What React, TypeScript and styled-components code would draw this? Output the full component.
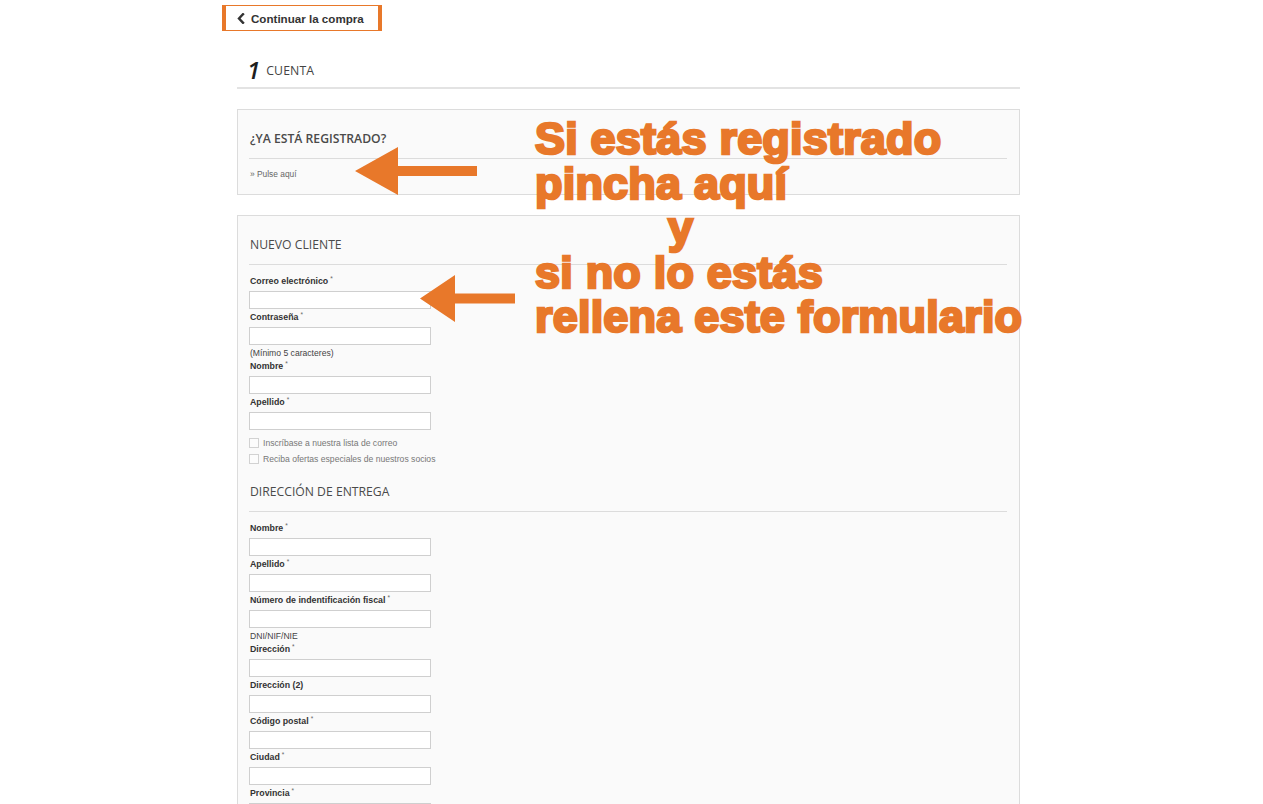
import React from "react";
import styled, { createGlobalStyle } from "styled-components";

const ORANGE = "#e8782a";

const GlobalStyle = createGlobalStyle`
  html, body {
    margin: 0;
    padding: 0;
    background: #ffffff;
  }
  body {
    font-family: "Liberation Sans", Arial, sans-serif;
    color: #333;
  }
  * { box-sizing: border-box; }
`;

const Page = styled.div`
  position: relative;
  width: 1263px;
  min-height: 804px;
  overflow: hidden;
`;

const Column = styled.div`
  margin-left: 237px;
  width: 783px;
  padding-top: 5px;
`;

const BackButton = styled.button`
  display: flex;
  align-items: center;
  gap: 6px;
  margin-left: -15px;
  width: 160px;
  height: 26px;
  padding: 0 0 0 11px;
  background: #fff;
  border: 1px solid ${ORANGE};
  border-left: 4px solid ${ORANGE};
  border-right: 4px solid ${ORANGE};
  font-family: "Liberation Sans", Arial, sans-serif;
  font-size: 11.6px;
  font-weight: 700;
  color: #333;
  cursor: pointer;
`;

const StepHeader = styled.div`
  display: flex;
  align-items: center;
  gap: 6px;
  height: 32px;
  margin-top: 26px;
  padding: 0 0 4px 10px;
  border-bottom: 2px solid #e3e3e3;
`;

const StepNumber = styled.span`
  font-family: "Open Sans", sans-serif;
  font-style: italic;
  font-weight: 600;
  font-size: 24px;
  line-height: 24px;
  color: #1e1e1e;
`;

const StepTitle = styled.span`
  font-family: "Open Sans", sans-serif;
  font-size: 12.3px;
  color: #444;
  letter-spacing: 0.1px;
`;

const Panel = styled.section<{ $gap: number }>`
  margin-top: ${(p) => p.$gap}px;
  background: #fafafa;
  border: 1px solid #dcdcdc;
  padding: 20px 12px 14px 11px;
`;

const SectionTitle = styled.h2<{ $weight?: number; $top?: number }>`
  margin: ${(p) => p.$top ?? 0}px 0 0 0;
  padding: 0 0 10px 1px;
  border-bottom: 1px solid #dcdcdc;
  font-family: "Open Sans", sans-serif;
  font-weight: ${(p) => p.$weight ?? 400};
  font-size: 12.2px;
  line-height: 18px;
  color: #4a4a4a;
`;

const SmallLink = styled.a`
  display: block;
  margin-top: 9px;
  font-size: 8.4px;
  line-height: 12px;
  color: #666;
  text-decoration: none;
  padding-left: 1px;
`;

const FieldList = styled.div`
  margin-top: 10px;
  display: flex;
  flex-direction: column;
`;

const Field = styled.div`
  display: flex;
  flex-direction: column;
`;

const Label = styled.label`
  font-size: 8.8px;
  font-weight: 700;
  line-height: 12px;
  color: #333;
  padding-left: 1px;
  margin-bottom: 4px;
`;

const Req = styled.sup`
  font-size: 6.5px;
  font-weight: 400;
  color: #666;
  margin-left: 2px;
  vertical-align: 3px;
  line-height: 0;
`;

const TextInput = styled.input`
  display: block;
  width: 182px;
  height: 18px;
  margin: 0 0 2px 0;
  padding: 0 4px;
  background: #fff;
  border: 1px solid #cfcfcf;
  border-radius: 0;
  outline: none;
`;

const Hint = styled.div`
  font-size: 8.6px;
  line-height: 12px;
  color: #444;
  padding-left: 1px;
  margin-bottom: 1px;
`;

const CheckList = styled.div`
  margin-top: 3px;
  display: flex;
  flex-direction: column;
`;

const CheckRow = styled.label`
  display: flex;
  align-items: center;
  gap: 4px;
  height: 16px;
  font-size: 8.6px;
  color: #777;
`;

const CheckBox = styled.span`
  display: block;
  width: 10px;
  height: 10px;
  background: #fcfcfc;
  border: 1px solid #d2d2d2;
`;

const Callout = styled.div`
  position: absolute;
  left: 535px;
  top: 117px;
  font-family: "Liberation Sans", Arial, sans-serif;
  font-weight: 700;
  font-size: 45px;
  line-height: 44.5px;
  letter-spacing: 0.2px;
  color: ${ORANGE};
  -webkit-text-stroke: 2.6px ${ORANGE};
  white-space: nowrap;
`;

const CalloutLine = styled.div<{ $indent?: number }>`
  padding-left: ${(p) => p.$indent ?? 0}px;
`;

const ArrowSvg = styled.svg<{ $x: number; $y: number }>`
  position: absolute;
  left: ${(p) => p.$x}px;
  top: ${(p) => p.$y}px;
  display: block;
`;

type FieldDef = { label: string; required?: boolean; hint?: string };

const accountFields: FieldDef[] = [
  { label: "Correo electrónico", required: true },
  { label: "Contraseña", required: true, hint: "(Mínimo 5 caracteres)" },
  { label: "Nombre", required: true },
  { label: "Apellido", required: true },
];

const deliveryFields: FieldDef[] = [
  { label: "Nombre", required: true },
  { label: "Apellido", required: true },
  { label: "Número de indentificación fiscal", required: true, hint: "DNI/NIF/NIE" },
  { label: "Dirección", required: true },
  { label: "Dirección (2)" },
  { label: "Código postal", required: true },
  { label: "Ciudad", required: true },
  { label: "Provincia", required: true },
];

function FormField({ label, required, hint }: FieldDef) {
  return (
    <Field>
      <Label>
        {label}
        {required && <Req>*</Req>}
      </Label>
      <TextInput type="text" />
      {hint && <Hint>{hint}</Hint>}
    </Field>
  );
}

function LeftArrow({ x, y, width, height, head }: { x: number; y: number; width: number; height: number; head: number }) {
  const mid = height / 2;
  const half = 5;
  const d = `M0 ${mid} L${head} 0 L${head} ${mid - half} L${width} ${mid - half} L${width} ${mid + half} L${head} ${mid + half} L${head} ${height} Z`;
  return (
    <ArrowSvg $x={x} $y={y} width={width} height={height} viewBox={`0 0 ${width} ${height}`}>
      <path d={d} fill={ORANGE} />
    </ArrowSvg>
  );
}

function ChevronLeft() {
  return (
    <svg width="8" height="11" viewBox="0 0 8 11">
      <polyline points="6,1.2 2,5.5 6,9.8" fill="none" stroke="#333" strokeWidth="2.4" strokeLinecap="square" />
    </svg>
  );
}

export default function App() {
  return (
    <Page>
      <GlobalStyle />
      <Column>
        <BackButton>
          <ChevronLeft />
          Continuar la compra
        </BackButton>

        <StepHeader>
          <StepNumber>1</StepNumber>
          <StepTitle>CUENTA</StepTitle>
        </StepHeader>

        <Panel $gap={20}>
          <SectionTitle $weight={600}>¿YA ESTÁ REGISTRADO?</SectionTitle>
          <SmallLink href="#">» Pulse aquí</SmallLink>
        </Panel>

        <Panel $gap={20}>
          <SectionTitle>NUEVO CLIENTE</SectionTitle>
          <FieldList>
            {accountFields.map((f) => (
              <FormField key={f.label} {...f} />
            ))}
          </FieldList>
          <CheckList>
            <CheckRow>
              <CheckBox />
              Inscríbase a nuestra lista de correo
            </CheckRow>
            <CheckRow>
              <CheckBox />
              Reciba ofertas especiales de nuestros socios
            </CheckRow>
          </CheckList>

          <SectionTitle $top={16}>DIRECCIÓN DE ENTREGA</SectionTitle>
          <FieldList>
            {deliveryFields.map((f) => (
              <FormField key={f.label} {...f} />
            ))}
          </FieldList>
        </Panel>
      </Column>

      <LeftArrow x={355} y={147} width={122} height={48} head={43} />
      <LeftArrow x={420} y={275} width={95} height={47} head={35} />

      <Callout>
        <CalloutLine>Si estás registrado</CalloutLine>
        <CalloutLine>pincha aquí</CalloutLine>
        <CalloutLine $indent={133}>y</CalloutLine>
        <CalloutLine>si no lo estás</CalloutLine>
        <CalloutLine>rellena este formulario</CalloutLine>
      </Callout>
    </Page>
  );
}
